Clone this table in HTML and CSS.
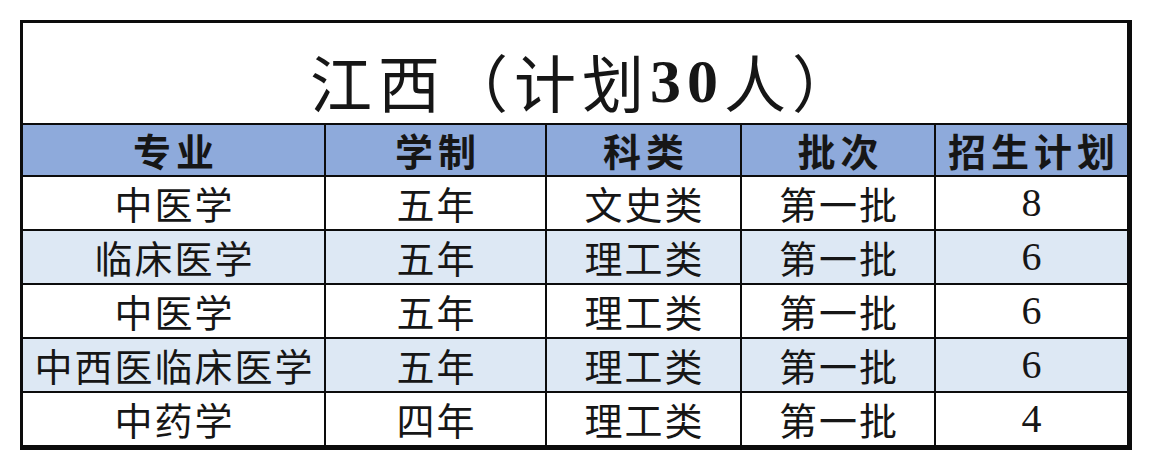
FILE: index.html
```html
<!DOCTYPE html>
<html lang="zh-CN">
<head>
<meta charset="utf-8">
<title>江西（计划30人）</title>
<link rel="stylesheet" href="styles.css">
</head>
<body>
<div class="sheet">
  <div class="title">江西（计划<span class="num-bold">30</span>人）</div>

  <div class="cell head">专业</div>
  <div class="cell head">学制</div>
  <div class="cell head">科类</div>
  <div class="cell head">批次</div>
  <div class="cell head">招生计划</div>

  <div class="cell">中医学</div>
  <div class="cell">五年</div>
  <div class="cell">文史类</div>
  <div class="cell">第一批</div>
  <div class="cell num">8</div>

  <div class="cell alt">临床医学</div>
  <div class="cell alt">五年</div>
  <div class="cell alt">理工类</div>
  <div class="cell alt">第一批</div>
  <div class="cell alt num">6</div>

  <div class="cell">中医学</div>
  <div class="cell">五年</div>
  <div class="cell">理工类</div>
  <div class="cell">第一批</div>
  <div class="cell num">6</div>

  <div class="cell alt">中西医临床医学</div>
  <div class="cell alt">五年</div>
  <div class="cell alt">理工类</div>
  <div class="cell alt">第一批</div>
  <div class="cell alt num">6</div>

  <div class="cell">中药学</div>
  <div class="cell">四年</div>
  <div class="cell">理工类</div>
  <div class="cell">第一批</div>
  <div class="cell num">4</div>
</div>
</body>
</html>
```

FILE: styles.css
```css
html, body {
  margin: 0;
  padding: 0;
  background: #ffffff;
}

body {
  padding: 20px 0 0 20px;
  font-family: "Noto Sans CJK SC", "Noto Sans", sans-serif;
  color: #161616;
}

.sheet {
  width: 1104px;
  display: grid;
  grid-template-columns: 301px 219px 193px 192px 191px;
  grid-template-rows: 100px 50px 52px 52px 52px 52px 52px;
  gap: 2px;
  background: #0c0c0c;
  border-style: solid;
  border-color: #0c0c0c;
  border-width: 3px 5px 5px 3px;
}

.title {
  grid-column: 1 / -1;
  background: #ffffff;
  display: flex;
  align-items: center;
  justify-content: center;
  padding: 16px 0 0 20px;
  box-sizing: border-box;
  font-size: 62px;
  letter-spacing: 6px;
  line-height: 1;
}

.num-bold {
  font-family: "Liberation Serif", serif;
  font-weight: 700;
}

.cell {
  background: #ffffff;
  display: flex;
  align-items: center;
  justify-content: center;
  font-size: 38px;
  line-height: 1;
  letter-spacing: 2px;
  padding-left: 2px;
  white-space: nowrap;
}

.head {
  background: #8eaadb;
  font-weight: 700;
  letter-spacing: 5px;
  padding-left: 5px;
}

.alt {
  background: #dde8f4;
}

.num {
  font-family: "Liberation Serif", serif;
  font-size: 40px;
  letter-spacing: 0;
  padding-left: 0;
}
```
